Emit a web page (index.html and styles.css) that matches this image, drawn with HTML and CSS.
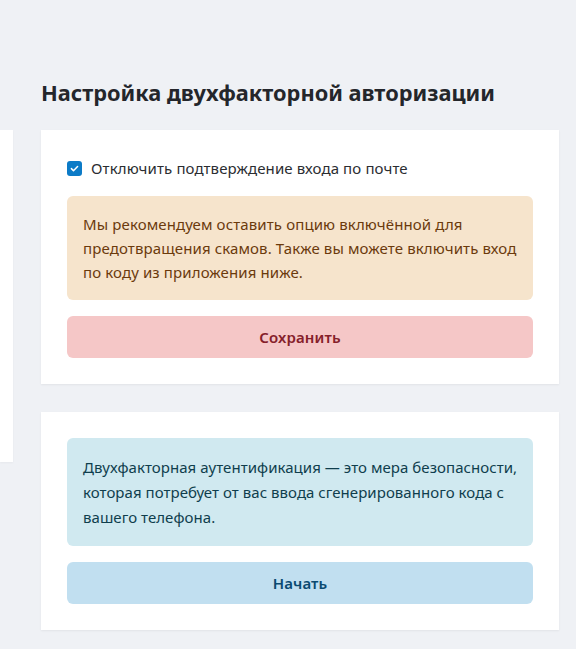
FILE: index.html
```html
<!DOCTYPE html>
<html lang="ru">
<head>
<meta charset="utf-8">
<link rel="stylesheet" href="styles.css">
</head>
<body>
<div class="layout">
  <aside class="sidebar"></aside>
  <main class="main">
    <h1 class="title">Настройка двухфакторной авторизации</h1>
    <section class="card">
      <label class="check">
        <span class="box"><svg viewBox="0 0 16 16" width="11" height="11"><path d="M3.5 8.2l3 3 6-6.2" fill="none" stroke="#fff" stroke-width="2.2" stroke-linecap="round" stroke-linejoin="round"/></svg></span>
        <span class="check-label">Отключить подтверждение входа по почте</span>
      </label>
      <div class="alert alert-warn">Мы рекомендуем оставить опцию включённой для предотвращения скамов. Также вы можете включить вход по коду из приложения ниже.</div>
      <button class="btn btn-danger">Сохранить</button>
    </section>
    <section class="card">
      <div class="alert alert-info">Двухфакторная аутентификация — это мера безопасности, которая потребует от вас ввода сгенерированного кода с вашего телефона.</div>
      <button class="btn btn-primary">Начать</button>
    </section>
  </main>
</div>
</body>
</html>
```

FILE: styles.css
```css
* { box-sizing: border-box; }
html, body { margin: 0; padding: 0; }
body {
  background: #eff1f5;
  font-family: "Noto Sans", "Open Sans", sans-serif;
  color: #212529;
  font-size: 15px;
  letter-spacing: 0.12px;
  width: 576px;
  height: 649px;
  overflow: hidden;
}
.layout {
  display: flex;
  align-items: flex-start;
  gap: 28px;
}
.sidebar {
  width: 13px;
  height: 332px;
  margin-top: 130px;
  background: #fff;
  box-shadow: 0 1px 2px rgba(0,0,0,.04);
}
.main {
  width: 518px;
  display: flex;
  flex-direction: column;
  gap: 28px;
}
.title {
  margin: 78px 0 -6px;
  font-size: 21.8px;
  line-height: 30px;
  font-weight: 700;
  color: #24262b;
  letter-spacing: 0;
}
.card {
  background: #fff;
  padding: 26px;
  display: flex;
  flex-direction: column;
  gap: 16px;
  box-shadow: 0 1px 2px rgba(0,0,0,.06);
}
.check {
  display: flex;
  align-items: center;
  gap: 9px;
  height: 24px;
}
.box {
  width: 15px;
  height: 15px;
  border-radius: 3px;
  background: #0c7bc7;
  display: flex;
  align-items: center;
  justify-content: center;
}
.check-label {
  color: #2b2d31;
  line-height: 24px;
}
.alert {
  border-radius: 6px;
  padding: 16px;
  line-height: 24px;
}
.alert-warn {
  background: #f6e4cc;
  color: #6b3a0c;
}
.alert-info {
  background: #d0e9f0;
  color: #0f3e4d;
  padding: 17px 14px 16px 16px;
  line-height: 25px;
  letter-spacing: 0.05px;
}
.btn {
  border: 0;
  border-radius: 6px;
  height: 42px;
  font-family: inherit;
  font-size: 15px;
  font-weight: 600;
  letter-spacing: 0.12px;
  width: 100%;
}
.btn-danger {
  background: #f5c7c7;
  color: #85202a;
}
.btn-primary {
  background: #c1dff0;
  color: #0b4a70;
}
```
